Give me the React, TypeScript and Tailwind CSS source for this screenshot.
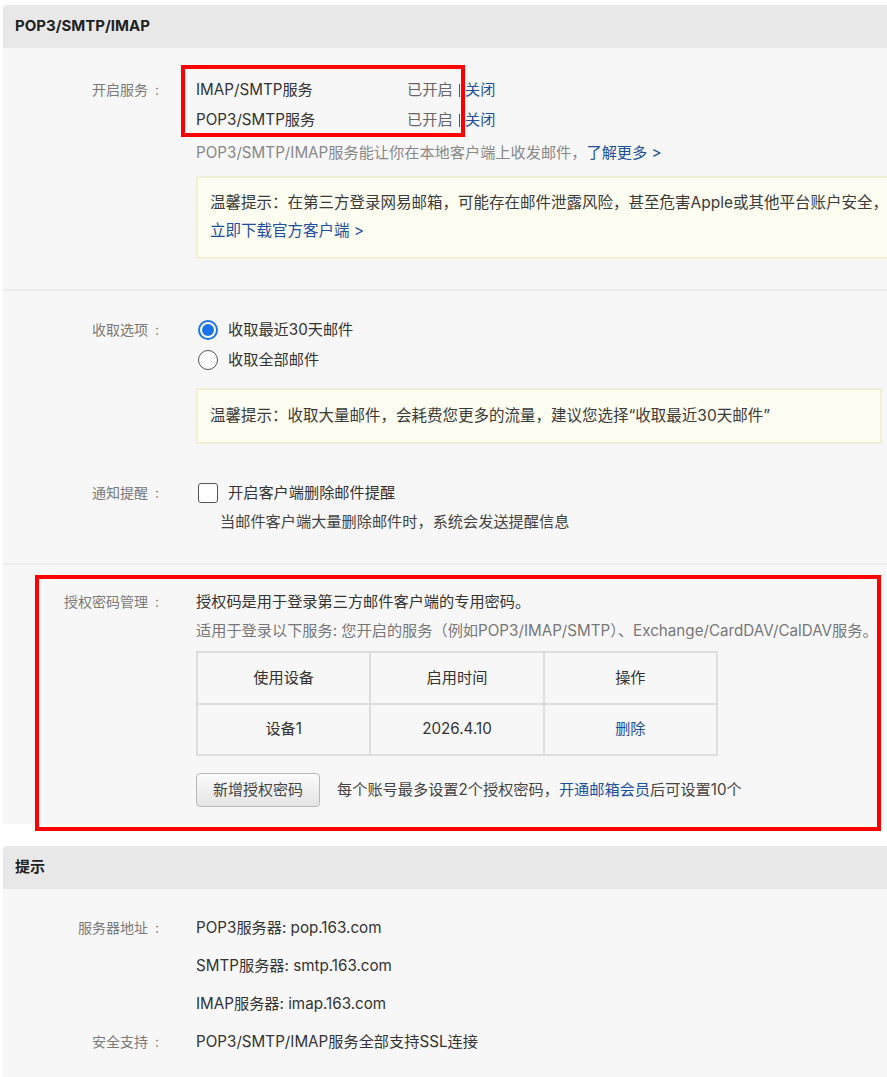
import React from 'react';

const font = { fontFamily: 'Inter, "Noto Sans CJK SC", sans-serif' };

function Label({ children, lh = 'leading-[30px]' }: { children: React.ReactNode; lh?: string }) {
  return (
    <div className={`flex w-[157px] shrink-0 justify-end text-[14px] text-[#7a7a7a] ${lh}`}>
      <span>{children}</span>
      <span className="w-[12px] pl-[7px]">:</span>
    </div>
  );
}

function Tip({ children }: { children: React.ReactNode }) {
  return <div className="border-2 border-[#f1efd6] bg-[#fdfdf1] px-[12px] text-[15.5px] leading-[28px] text-[#3a3a3a]">{children}</div>;
}

function Radio({ checked }: { checked?: boolean }) {
  return checked ? (
    <span className="flex h-[20px] w-[20px] items-center justify-center rounded-full border-2 border-[#1a73e8] bg-white">
      <span className="h-[12px] w-[12px] rounded-full bg-[#1a73e8]" />
    </span>
  ) : (
    <span className="h-[20px] w-[20px] rounded-full border-[1.5px] border-[#555] bg-white" />
  );
}

function Service({ name }: { name: string }) {
  return (
    <div className="flex items-center leading-[30px]">
      <span className="w-[211px]">{name}</span>
      <span className="text-[#666]">已开启</span>
      <span className="ml-[6px] h-[13px] w-[1.5px] bg-[#555]" />
      <span className="ml-[5px] text-[#1d4f9f]">关闭</span>
    </div>
  );
}

export default function App() {
  return (
    <div className="relative min-h-[1077px] bg-white pl-[3px] pt-[5px] text-[15.2px] text-[#333]" style={font}>
      {/* panel 1 */}
      <div className="overflow-hidden rounded-tl-[4px] bg-[#f7f7f7]">
        <div className="flex h-[43px] items-center bg-[#e8e8e8] pl-[12px] text-[15px] font-bold text-[#222]">POP3/SMTP/IMAP</div>

        <div className="flex gap-[36px] pb-[30px] pt-[27px]">
          <Label>开启服务</Label>
          <div className="flex-1 pr-[5px]">
            <Service name="IMAP/SMTP服务" />
            <Service name="POP3/SMTP服务" />
            <div className="mt-[3px] leading-[30px] text-[#888]">
              POP3/SMTP/IMAP服务能让你在本地客户端上收发邮件，<span className="text-[#1d4f9f]">了解更多 &gt;</span>
            </div>
            <div className="mt-[8px]">
              <Tip>
                <div className="overflow-hidden whitespace-nowrap pt-[11px]">温馨提示：在第三方登录网易邮箱，可能存在邮件泄露风险，甚至危害Apple或其他平台账户安全，</div>
                <div className="pb-[12px] text-[#1d4f9f]">立即下载官方客户端 &gt;</div>
              </Tip>
            </div>
          </div>
        </div>
        <div className="h-[2px] bg-[#ededed]" />

        <div className="pb-[27px] pt-[24px]">
          <div className="flex gap-[36px]">
            <Label>收取选项</Label>
            <div className="flex-1 pr-[5px]">
              <div className="flex h-[30px] items-center gap-[10px] pl-[2px]"><Radio checked /><span>收取最近30天邮件</span></div>
              <div className="flex h-[30px] items-center gap-[10px] pl-[2px]"><Radio /><span>收取全部邮件</span></div>
              <div className="mt-[13px]">
                <Tip><div className="py-[12px]">温馨提示：收取大量邮件，会耗费您更多的流量，建议您选择“收取最近30天邮件”</div></Tip>
              </div>
            </div>
          </div>
          <div className="mt-[34px] flex gap-[36px]">
            <Label>通知提醒</Label>
            <div className="flex-1">
              <div className="flex h-[30px] items-center gap-[10px] pl-[2px]">
                <span className="h-[20px] w-[20px] rounded-[3px] border-[1.5px] border-[#555] bg-white" />
                <span>开启客户端删除邮件提醒</span>
              </div>
              <div className="pl-[24px] leading-[28px] text-[#444]">当邮件客户端大量删除邮件时，系统会发送提醒信息</div>
            </div>
          </div>
        </div>
        <div className="h-[2px] bg-[#ededed]" />

        <div className="flex gap-[36px] pb-[17px] pt-[22px]">
          <Label>授权密码管理</Label>
          <div className="min-w-0 flex-1">
            <div className="leading-[30px]">授权码是用于登录第三方邮件客户端的专用密码。</div>
            <div className="whitespace-nowrap leading-[28px] text-[#777]">适用于登录以下服务: 您开启的服务（例如POP3/IMAP/SMTP）、Exchange/CardDAV/CalDAV服务。</div>
            <div className="mt-[6px] grid w-[522px] grid-cols-3 border-l-2 border-t-2 border-[#dedede] text-center">
              {['使用设备', '启用时间', '操作'].map((t) => (
                <div key={t} className="flex h-[52px] items-center justify-center border-b-2 border-r-2 border-[#dedede]">{t}</div>
              ))}
              <div className="flex h-[51px] items-center justify-center border-b-2 border-r-2 border-[#dedede]">设备1</div>
              <div className="flex h-[51px] items-center justify-center border-b-2 border-r-2 border-[#dedede]">2026.4.10</div>
              <div className="flex h-[51px] items-center justify-center border-b-2 border-r-2 border-[#dedede] text-[#1d4f9f]">删除</div>
            </div>
            <div className="mt-[17px] flex items-center gap-[17px]">
              <button className="h-[34px] w-[124px] rounded-[4px] border border-[#b8b8b8] bg-gradient-to-b from-[#fbfbfb] to-[#e4e4e4] text-[15px] text-[#444]">新增授权密码</button>
              <span className="text-[#444]">每个账号最多设置2个授权密码，<span className="text-[#1d4f9f]">开通邮箱会员</span>后可设置10个</span>
            </div>
          </div>
        </div>
      </div>

      {/* panel 2 */}
      <div className="mt-[22px] overflow-hidden rounded-tl-[4px] bg-[#f7f7f7] pb-[20px]">
        <div className="flex h-[43px] items-center bg-[#e8e8e8] pl-[12px] text-[15px] font-bold text-[#222]">提示</div>
        <div className="pt-[20px]">
          <div className="flex gap-[36px] leading-[38px]">
            <Label lh="leading-[38px]">服务器地址</Label>
            <div>
              <div>POP3服务器: pop.163.com</div>
              <div>SMTP服务器: smtp.163.com</div>
              <div>IMAP服务器: imap.163.com</div>
            </div>
          </div>
          <div className="flex gap-[36px] leading-[38px]">
            <Label lh="leading-[38px]">安全支持</Label>
            <div>POP3/SMTP/IMAP服务全部支持SSL连接</div>
          </div>
        </div>
      </div>

      {/* annotation boxes */}
      <div className="pointer-events-none absolute left-[181px] top-[65px] h-[72px] w-[284px] border-4 border-[#ff0000]" />
      <div className="pointer-events-none absolute left-[35px] top-[575px] h-[256px] w-[846px] border-4 border-[#ff0000]" />
    </div>
  );
}
